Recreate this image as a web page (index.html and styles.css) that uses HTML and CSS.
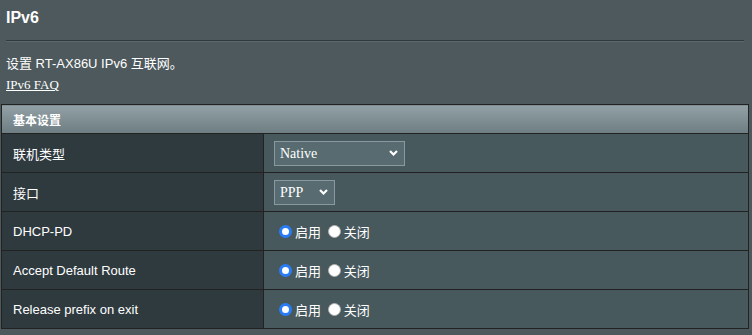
FILE: index.html
```html
<!DOCTYPE html>
<html lang="zh-CN">
<head>
    <meta charset="UTF-8">
    <title>IPv6</title>
    <link rel="stylesheet" href="styles.css">
</head>
<body>
    <div class="page">
        <div class="page-title">IPv6</div>
        <div class="divider"></div>
        <div class="desc">设置 RT-AX86U IPv6 互联网。</div>
        <div class="faq"><a href="#">IPv6 FAQ</a></div>

        <table class="form-table">
            <thead>
                <tr><th colspan="2">基本设置</th></tr>
            </thead>
            <tbody>
                <tr>
                    <td class="label">联机类型</td>
                    <td class="field">
                        <select class="input-select wide">
                            <option>Native</option>
                        </select>
                    </td>
                </tr>
                <tr>
                    <td class="label">接口</td>
                    <td class="field">
                        <select class="input-select narrow">
                            <option>PPP</option>
                        </select>
                    </td>
                </tr>
                <tr>
                    <td class="label">DHCP-PD</td>
                    <td class="field">
                        <label class="radio"><input type="radio" name="dhcppd" checked>启用</label>
                        <label class="radio"><input type="radio" name="dhcppd">关闭</label>
                    </td>
                </tr>
                <tr>
                    <td class="label">Accept Default Route</td>
                    <td class="field">
                        <label class="radio"><input type="radio" name="defroute" checked>启用</label>
                        <label class="radio"><input type="radio" name="defroute">关闭</label>
                    </td>
                </tr>
                <tr>
                    <td class="label">Release prefix on exit</td>
                    <td class="field">
                        <label class="radio"><input type="radio" name="release" checked>启用</label>
                        <label class="radio"><input type="radio" name="release">关闭</label>
                    </td>
                </tr>
            </tbody>
        </table>
    </div>
</body>
</html>
```

FILE: styles.css
```css
html, body {
    margin: 0;
    padding: 0;
    background: #4d595d;
    color: #fff;
    font-family: "Liberation Sans", Arial, "Noto Sans CJK SC", sans-serif;
    font-size: 13px;
}
.page {
    padding: 0 3px 0 1px;
}
.page-title {
    font-size: 16px;
    font-weight: bold;
    line-height: 18px;
    padding: 9px 0 0 5px;
    height: 31px;
}
.divider {
    margin: 0 5px 0 5px;
    height: 1px;
    background: #2f3a3e;
    border-bottom: 1px solid #5c686c;
}
.desc {
    padding: 14px 0 0 5px;
    line-height: 16px;
}
.faq {
    padding: 5px 0 0 5px;
    line-height: 16px;
    height: 27px;
}
.faq a {
    color: #fff;
    font-family: "Liberation Serif", "Times New Roman", serif;
    font-size: 13px;
}
.form-table {
    width: 748px;
    border-collapse: collapse;
    border: 1px solid #222;
}
.form-table th {
    height: 28px;
    padding: 0 0 0 11px;
    text-align: left;
    font-size: 12px;
    font-weight: bold;
    background: linear-gradient(#93a1a6, #6d7d82);
    border: 1px solid #222;
}
.form-table td {
    height: 38px;
    padding: 0;
    border: 1px solid #222;
    vertical-align: middle;
}
.form-table td.label {
    width: 250px;
    padding-left: 11px;
    background: #2f3a3f;
}
.form-table td.field {
    padding-left: 10px;
    background: #48595e;
}
.input-select {
    appearance: none;
    -webkit-appearance: none;
    height: 25px;
    margin: 0;
    padding: 0 0 0 5px;
    color: #fff;
    font-family: "Liberation Serif", "Times New Roman", serif;
    font-size: 14px;
    background: #576b70 url("data:image/svg+xml,%3Csvg xmlns='http://www.w3.org/2000/svg' width='9' height='6' viewBox='0 0 9 6'%3E%3Cpath d='M1 1l3.5 3.5L8 1' fill='none' stroke='%23fff' stroke-width='2.2'/%3E%3C/svg%3E") no-repeat right 6px center;
    border: 1px solid #8a999d;
    border-radius: 0;
    vertical-align: middle;
}
.input-select.wide {
    width: 131px;
}
.input-select.narrow {
    width: 61px;
}
.radio {
    display: inline-flex;
    align-items: center;
    margin-right: 3px;
    vertical-align: middle;
}
.radio input {
    appearance: none;
    -webkit-appearance: none;
    width: 13px;
    height: 13px;
    margin: 0 3px 0 5px;
    border-radius: 50%;
    background: #fff;
    border: 1px solid #b0b0b0;
    box-sizing: border-box;
}
.radio + .radio input {
    margin-left: 0;
}
.radio input:checked {
    border: 3px solid #2a7cf6;
    background: #fff;
}
```
